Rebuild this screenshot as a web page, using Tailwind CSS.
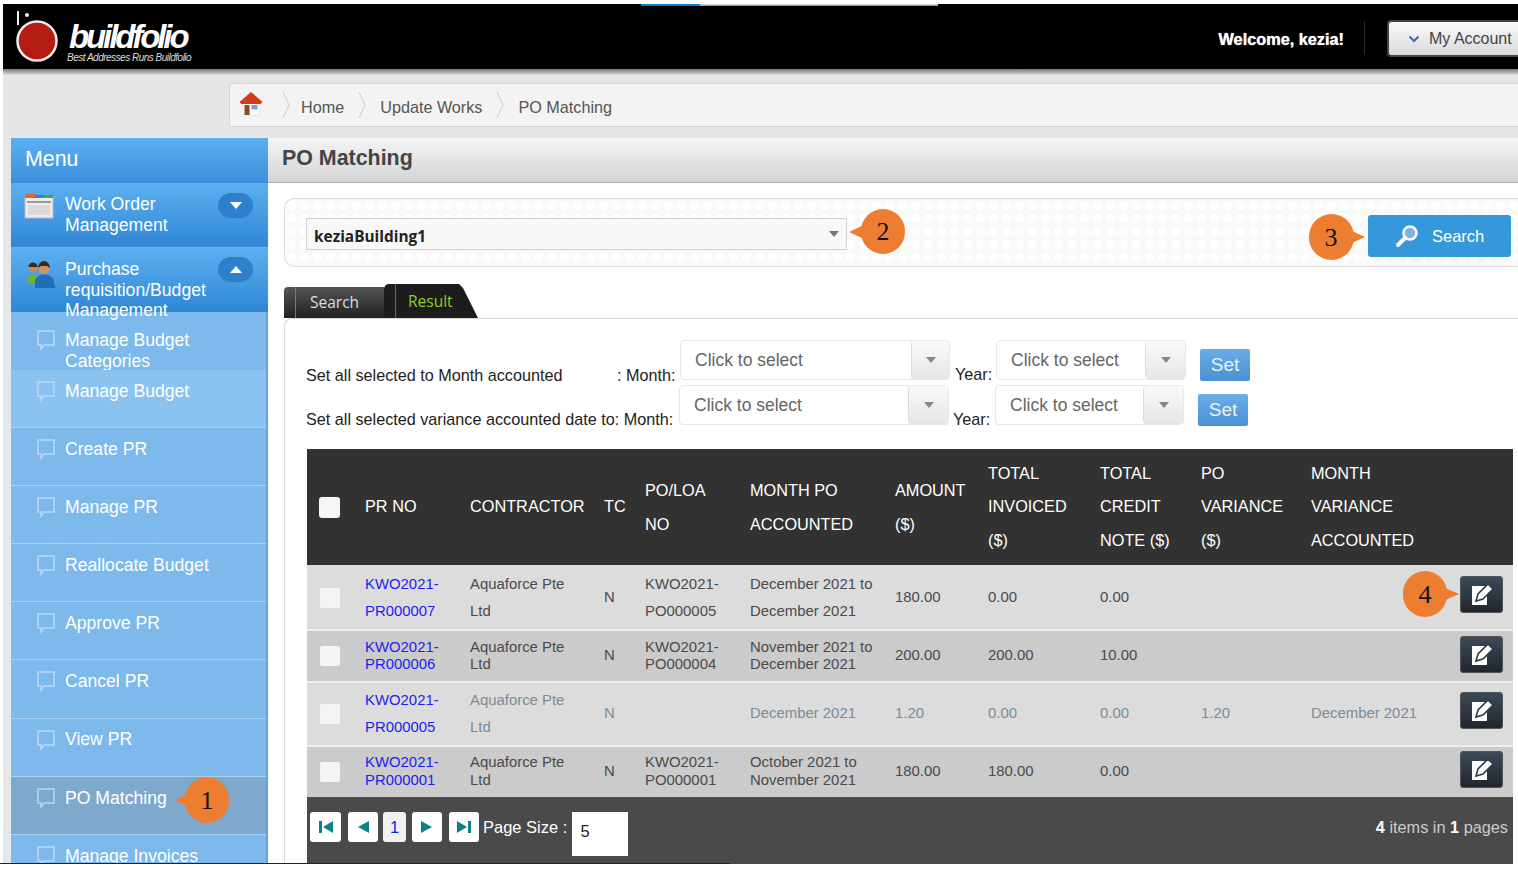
<!doctype html>
<html>
<head>
<meta charset="utf-8">
<script src="https://cdn.jsdelivr.net/npm/@tailwindcss/browser@4"></script>
</head>
<body class="bg-white overflow-hidden font-['Liberation_Sans',Arial,sans-serif]">
<div class="relative w-[1518px] h-[870px] overflow-hidden">
  <div class="h-1"></div>
  <div class="ml-[3px] h-[860px] bg-[#e5e6e7] overflow-hidden flex flex-col">
    <!-- header -->
    <header class="h-[65px] shrink-0 bg-black flex items-center relative">
      <div class="absolute left-[638px] top-0 flex h-[2px]"><div class="w-[59px] bg-[#0f7fd6]"></div><div class="w-[238px] bg-gradient-to-b from-[#eee] to-[#888]"></div></div>
      <div class="relative w-[200px] h-[65px] shrink-0">
        <svg class="absolute left-[12px] top-[6px]" width="48" height="54" viewBox="0 0 48 54"><rect x="2" y="1" width="2" height="14" fill="#eee"/><circle cx="12" cy="5" r="2" fill="#eee"/><circle cx="22" cy="31" r="19.500" fill="#b51c14" stroke="#eee" stroke-width="2.500"/></svg>
        <span class="absolute left-[66px] top-[19px] text-white italic font-bold text-[33px] leading-[28px] tracking-[-3.100px]">buildfolio</span>
        <span class="absolute left-[64px] top-[48px] text-[#ddd] italic text-[10px] leading-3 tracking-[-0.500px] whitespace-nowrap">Best Addresses Runs Buildfolio</span>
      </div>
      <div class="flex-1"></div>
      <span class="text-white font-bold text-[16.300px] mr-[20px] mt-[6px] [text-shadow:0_0_1px_#fff]">Welcome, kezia!</span>
      <div class="w-px h-[34px] bg-[#2a2a2a] mr-[22px] mt-[3px]"></div>
      <div class="w-[132px] h-[37px] -mr-[1px] mt-[4px] rounded-l-[4px] border-2 border-r-0 border-[#444] bg-gradient-to-b from-[#fafafa] to-[#d9dadc] flex items-center pl-[19px] gap-[9px]">
        <svg width="12" height="8" viewBox="0 0 12 8"><path d="M1.500 1.500 L6 6 L10.500 1.500" fill="none" stroke="#3b6ea5" stroke-width="2"/></svg>
        <span class="text-[16px] text-[#444] whitespace-nowrap">My Account</span>
      </div>
    </header>
    <div class="h-[6px] shrink-0 bg-gradient-to-b from-[#777] to-[#e0e1e2]"></div>
    <!-- breadcrumb -->
    <div class="h-[44px] mt-[8px] ml-[226px] shrink-0 bg-[#f3f3f3] border border-r-0 border-[#d6d6d6] flex items-center text-[16.200px] text-[#555]">
      <div class="w-[52px] pl-[9px] flex items-center -mt-[3px]">
        <svg width="24" height="26" viewBox="0 0 24 26"><path d="M3.500 10h17v14h-17z" fill="#fbfbf8" stroke="#ddd" stroke-width=".6"/><path d="M5.500 14h5v10h-5z" fill="#8a4a1a"/><path d="M12.500 14h6v4.500h-6z" fill="#7f9fc0"/><path d="M0.500 11 12 1l11.500 10-2 2H2.500z" fill="#d63a20"/></svg>
      </div>
      <svg class="mr-[11px]" width="8" height="28" viewBox="0 0 8 28"><path d="M1 1l6 13-6 13" fill="none" stroke="#ccc"/></svg>
      <span class="mt-[5px]">Home</span>
      <svg class="mx-[14px]" width="8" height="28" viewBox="0 0 8 28"><path d="M1 1l6 13-6 13" fill="none" stroke="#ccc"/></svg>
      <span class="mt-[5px]">Update Works</span>
      <svg class="mx-[14px]" width="8" height="28" viewBox="0 0 8 28"><path d="M1 1l6 13-6 13" fill="none" stroke="#ccc"/></svg>
      <span class="mt-[5px]">PO Matching</span>
    </div>
    <div class="flex flex-1 mt-[11px] ml-[8px] min-h-0 bg-white">
      <!-- sidebar -->
      <aside class="w-[257px] shrink-0 bg-[#7db9eb] text-white overflow-hidden text-[17.600px] leading-[20.500px]">
        <div class="h-[45px] flex items-center pl-[14px] pb-[3px] text-[21.400px] bg-gradient-to-b from-[#5cb0f0] to-[#3c8fdb]">Menu</div>
        <div class="h-[65px] relative pl-[54px] pt-[11px] bg-gradient-to-b from-[#5cb0f0] to-[#2f86d6] border-b border-[#7db9eb]/40 leading-[21px]">
          <svg class="absolute left-[13px] top-[10px]" width="30" height="26" viewBox="0 0 30 26"><rect x="1" y="4" width="28" height="21" fill="#ececec" stroke="#bbb"/><rect x="1" y="1" width="11" height="4" fill="#e2642c"/><rect x="11" y="2" width="9" height="3" fill="#3c7bc9"/><rect x="20" y="2" width="9" height="3" fill="#4aa547"/><rect x="3" y="8" width="24" height="2" fill="#999"/><rect x="4" y="12" width="22" height="10" fill="#d9d9d9"/></svg>
          <div>Work Order<br>Management</div>
          <div class="absolute left-[207px] top-[10px] w-[35px] h-[25px] rounded-full bg-[#2f80cc] flex items-center justify-center"><svg width="12" height="7"><path d="M0 0h12L6 7z" fill="#fff"/></svg></div>
        </div>
        <div class="h-[64px] relative pl-[54px] pt-[11px] bg-gradient-to-b from-[#5cb0f0] to-[#2f86d6]">
          <svg class="absolute left-[15px] top-[12px]" width="32" height="30" viewBox="0 0 32 30"><circle cx="7" cy="8" r="4.500" fill="#c08a60"/><path d="M2.500 7a4.500 4.500 0 0 1 9 0z" fill="#3a2a20"/><path d="M1 21c0-8 13-8 13 0v3H1z" fill="#6fb52c"/><circle cx="18" cy="8" r="6" fill="#c89670"/><path d="M12 8a6 7 0 0 1 12 0l-3-2h-6z" fill="#3a2a20"/><path d="M9 28v-6c0-10 19-10 19 0 0 2 1 5 2 6z" fill="#1f6fb5"/></svg>
          <div class="relative z-10">Purchase<br>requisition/Budget<br>Management</div>
          <div class="absolute left-[207px] top-[9px] w-[35px] h-[25px] rounded-full bg-[#2f80cc] flex items-center justify-center"><svg width="12" height="7"><path d="M0 7h12L6 0z" fill="#fff"/></svg></div>
        </div>
        <div class="border-r-[2px] border-[#62a3dd]">
          <div class="h-[58px] relative pl-[54px] pt-[18px] bg-[#7db9eb]"><svg class="absolute left-[26px] top-[18px]" width="18" height="21" viewBox="0 0 18 21"><path d="M1 1h16v14H7l-3 4v-4H1z" fill="none" stroke="#bcd8f4" stroke-width="1.500"/></svg><div>Manage Budget<br>Categories</div></div>
          <div class="h-[58px] relative pl-[54px] pt-[11px] bg-[#8ac2f0] border-b border-[#a6d2f5]"><svg class="absolute left-[26px] top-[11px]" width="18" height="21" viewBox="0 0 18 21"><path d="M1 1h16v14H7l-3 4v-4H1z" fill="none" stroke="#bcd8f4" stroke-width="1.500"/></svg>Manage Budget</div>
          <div class="h-[58px] relative pl-[54px] pt-[11px] border-b border-[#a6d2f5]"><svg class="absolute left-[26px] top-[11px]" width="18" height="21" viewBox="0 0 18 21"><path d="M1 1h16v14H7l-3 4v-4H1z" fill="none" stroke="#bcd8f4" stroke-width="1.500"/></svg>Create PR</div>
          <div class="h-[58px] relative pl-[54px] pt-[11px] border-b border-[#a6d2f5]"><svg class="absolute left-[26px] top-[11px]" width="18" height="21" viewBox="0 0 18 21"><path d="M1 1h16v14H7l-3 4v-4H1z" fill="none" stroke="#bcd8f4" stroke-width="1.500"/></svg>Manage PR</div>
          <div class="h-[58px] relative pl-[54px] pt-[11px] border-b border-[#a6d2f5]"><svg class="absolute left-[26px] top-[11px]" width="18" height="21" viewBox="0 0 18 21"><path d="M1 1h16v14H7l-3 4v-4H1z" fill="none" stroke="#bcd8f4" stroke-width="1.500"/></svg>Reallocate Budget</div>
          <div class="h-[58px] relative pl-[54px] pt-[11px] border-b border-[#a6d2f5]"><svg class="absolute left-[26px] top-[11px]" width="18" height="21" viewBox="0 0 18 21"><path d="M1 1h16v14H7l-3 4v-4H1z" fill="none" stroke="#bcd8f4" stroke-width="1.500"/></svg>Approve PR</div>
          <div class="h-[59px] relative pl-[54px] pt-[11px] border-b border-[#a6d2f5]"><svg class="absolute left-[26px] top-[11px]" width="18" height="21" viewBox="0 0 18 21"><path d="M1 1h16v14H7l-3 4v-4H1z" fill="none" stroke="#bcd8f4" stroke-width="1.500"/></svg>Cancel PR</div>
          <div class="h-[58px] relative pl-[54px] pt-[10px] border-b border-[#a6d2f5]"><svg class="absolute left-[26px] top-[11px]" width="18" height="21" viewBox="0 0 18 21"><path d="M1 1h16v14H7l-3 4v-4H1z" fill="none" stroke="#bcd8f4" stroke-width="1.500"/></svg>View PR</div>
          <div class="h-[58px] relative pl-[54px] pt-[11px] bg-[#7fa9cc] border-b border-[#a6d2f5]"><svg class="absolute left-[26px] top-[11px]" width="18" height="21" viewBox="0 0 18 21"><path d="M1 1h16v14H7l-3 4v-4H1z" fill="none" stroke="#bcd8f4" stroke-width="1.500"/></svg>PO Matching</div>
          <div class="h-[58px] relative pl-[54px] pt-[11px]"><svg class="absolute left-[26px] top-[11px]" width="18" height="21" viewBox="0 0 18 21"><path d="M1 1h16v14H7l-3 4v-4H1z" fill="none" stroke="#bcd8f4" stroke-width="1.500"/></svg>Manage Invoices</div>
        </div>
      </aside>
      <!-- main -->
      <main class="flex-1 min-w-0 bg-white">
        <div class="h-[45px] pl-[14px] pb-[3px] flex items-center bg-gradient-to-b from-[#f4f5f5] to-[#d3d4d6] border-b border-[#a9abae] text-[21.400px] font-bold text-[#444]">PO Matching</div>
        <div class="ml-[16px] mt-[15px] h-[69px] rounded-l-[10px] border border-r-0 border-[#dcdcdc] bg-[#f9f9f9] bg-[radial-gradient(circle,#ffffff_4px,transparent_5px)] bg-[length:13px_13px] flex items-center relative">
          <div class="ml-[21px] mt-[2px] w-[541px] h-[32px] border border-[#d0d0d0] bg-[#f8f8f8] flex items-center pl-[7px] pt-[7px] font-bold text-[15.400px] text-[#222] font-['Open_Sans',sans-serif] relative">keziaBuilding1<svg class="absolute right-[7px] top-[12px]" width="10" height="6"><path d="M0 0h10L5 6z" fill="#777"/></svg></div>
          <div class="absolute left-[1083px] top-[16px] w-[143px] h-[42px] rounded-[3px] bg-[#3498db] text-white flex items-center text-[16.500px] pl-[27px] gap-[13px]">
            <svg width="24" height="24" viewBox="0 0 24 24"><circle cx="15" cy="9" r="6.500" fill="#7fb3e6" stroke="#fff" stroke-width="2.500"/><path d="M10 14 3 21" stroke="#fff" stroke-width="4" stroke-linecap="round"/></svg>
            <span>Search</span>
          </div>
        </div>
        <!-- tabs -->
        <div class="ml-[16px] mt-[17px] h-[34px] flex items-end font-['Open_Sans',sans-serif] text-[15.500px]">
          <div class="w-[100px] h-[31px] rounded-tl-[4px] bg-gradient-to-b from-[#555] to-[#222] text-[#ddd] pl-[11px] flex items-stretch"><span class="border-l border-[#777] pl-[14px] leading-[30px]">Search</span></div>
          <div class="w-[94px] h-[34px] bg-[#1c1c1c] text-[#8fd11f] pl-[11px] rounded-tl-[5px] [clip-path:polygon(0_0,75px_0,79px_4px,94px_100%,0_100%)] flex items-stretch"><span class="border-l border-[#666] pl-[12px] leading-[35px]">Result</span></div>
        </div>
        <!-- result panel -->
        <div class="ml-[16px] h-[600px] rounded-tl-[8px] border-l border-t border-[#d9d9d9] relative">
          <!-- row 1 -->
          <div class="flex items-end h-[40px] mt-[21px] pl-[21px] text-[16.200px] text-[#222] leading-[20px]">
            <span class="w-[311px] -mb-[5px] whitespace-nowrap">Set all selected to Month accounted</span><span class="w-[63px] -mb-[5px] whitespace-nowrap">: Month:</span>
            <div class="w-[270px] h-[40px] rounded-[4px] border border-[#e8e8e8] bg-white flex text-[#666] text-[17.500px]"><span class="flex-1 pl-[14px] leading-[38px]">Click to select</span><span class="w-[38px] rounded-[4px] bg-gradient-to-b from-[#fafafa] to-[#e6e6e6] border-l border-[#ddd] flex items-center justify-center"><svg width="10" height="6"><path d="M0 0h10L5 6z" fill="#888"/></svg></span></div>
            <span class="w-[46px] pl-[5px] -mb-[4px]">Year:</span>
            <div class="w-[190px] h-[40px] rounded-[4px] border border-[#e8e8e8] bg-white flex text-[#666] text-[17.500px]"><span class="flex-1 pl-[14px] leading-[38px]">Click to select</span><span class="w-[40px] rounded-[4px] bg-gradient-to-b from-[#fafafa] to-[#e6e6e6] border-l border-[#ddd] flex items-center justify-center"><svg width="10" height="6"><path d="M0 0h10L5 6z" fill="#888"/></svg></span></div>
            <div class="ml-[14px] w-[50px] h-[32px] mb-[-1px] rounded-[2px] bg-gradient-to-b from-[#69aee6] to-[#4a90d2] text-[#e8f3fb] text-[19px] flex items-center justify-center">Set</div>
          </div>
          <!-- row 2 -->
          <div class="flex items-end h-[40px] mt-[5px] pl-[21px] text-[16.200px] text-[#222] leading-[20px]">
            <span class="w-[373px] -mb-[4px] whitespace-nowrap">Set all selected variance accounted date to: Month:</span>
            <div class="w-[270px] h-[40px] rounded-[4px] border border-[#e8e8e8] bg-white flex text-[#666] text-[17.500px]"><span class="flex-1 pl-[14px] leading-[38px]">Click to select</span><span class="w-[40px] rounded-[4px] bg-gradient-to-b from-[#fafafa] to-[#e6e6e6] border-l border-[#ddd] flex items-center justify-center"><svg width="10" height="6"><path d="M0 0h10L5 6z" fill="#888"/></svg></span></div>
            <span class="w-[46px] pl-[4px] -mb-[4px]">Year:</span>
            <div class="w-[189px] h-[40px] rounded-[4px] border border-[#e8e8e8] bg-white flex text-[#666] text-[17.500px]"><span class="flex-1 pl-[14px] leading-[38px]">Click to select</span><span class="w-[40px] rounded-[4px] bg-gradient-to-b from-[#fafafa] to-[#e6e6e6] border-l border-[#ddd] flex items-center justify-center"><svg width="10" height="6"><path d="M0 0h10L5 6z" fill="#888"/></svg></span></div>
            <div class="ml-[14px] w-[50px] h-[32px] mb-[-1px] rounded-[2px] bg-gradient-to-b from-[#69aee6] to-[#4a90d2] text-[#e8f3fb] text-[19px] flex items-center justify-center">Set</div>
          </div>
          <!-- table -->
          <div class="ml-[22px] mt-[24px] w-[1206px]">
            <table class="w-[1206px] table-fixed border-collapse text-[14.900px] text-[#4a4a4a]">
              <colgroup><col class="w-[58px]"><col class="w-[105px]"><col class="w-[134px]"><col class="w-[41px]"><col class="w-[105px]"><col class="w-[145px]"><col class="w-[93px]"><col class="w-[112px]"><col class="w-[101px]"><col class="w-[110px]"><col class="w-[150px]"><col class="w-[52px]"></colgroup>
              <thead class="bg-[#323232] text-white text-[16.300px] leading-[33.500px] text-left font-normal">
                <tr class="h-[116px]">
                  <th class="font-normal pl-[12px]"><span class="block w-[21px] h-[21px] rounded-[3px] bg-[#f6f6f6]"></span></th>
                  <th class="font-normal">PR NO</th><th class="font-normal">CONTRACTOR</th><th class="font-normal">TC</th>
                  <th class="font-normal pb-[1px] leading-[34px]">PO/LOA<br>NO</th><th class="font-normal pb-[1px] leading-[34px]">MONTH PO<br>ACCOUNTED</th><th class="font-normal pb-[1px] leading-[34px]">AMOUNT<br>($)</th>
                  <th class="font-normal">TOTAL<br>INVOICED<br>($)</th><th class="font-normal">TOTAL<br>CREDIT<br>NOTE ($)</th><th class="font-normal">PO<br>VARIANCE<br>($)</th><th class="font-normal">MONTH<br>VARIANCE<br>ACCOUNTED</th><th></th>
                </tr>
              </thead>
              <tbody>
                <tr class="h-[65px] bg-[#dcdcdc] border-b-2 border-[#eee] leading-[27px] [&>td]:pt-[1px]">
                  <td class="pl-[13px]"><span class="block w-[20px] h-[20px] rounded-[2px] bg-[#f4f4f4]"></span></td>
                  <td class="text-[#1e1ef0]">KWO2021-<br>PR000007</td><td>Aquaforce Pte<br>Ltd</td><td>N</td><td>KWO2021-<br>PO000005</td><td>December 2021 to<br>December 2021</td><td>180.00</td><td>0.00</td><td>0.00</td><td></td><td></td>
                  <td><span class="flex -ml-[1px] mb-[7px] w-[43px] h-[37px] rounded-[3px] border border-[#555] bg-gradient-to-b from-[#3e4a59] to-[#20262e] items-center justify-center"><svg width="26" height="24" viewBox="0 0 26 24"><path d="M3 4h15v19H3z" fill="#fff"/><path d="M7 19l2-7L19 2l5 5-10 10z" fill="#fff" stroke="#2f3a47" stroke-width="1.600"/></svg></span></td>
                </tr>
                <tr class="h-[52px] bg-[#cbcbcb] border-b-2 border-[#eee] leading-[17px] [&>td]:pb-[1px]">
                  <td class="pl-[13px]"><span class="block w-[20px] h-[20px] rounded-[2px] bg-[#f4f4f4]"></span></td>
                  <td class="text-[#1e1ef0]">KWO2021-<br>PR000006</td><td>Aquaforce Pte<br>Ltd</td><td>N</td><td>KWO2021-<br>PO000004</td><td>November 2021 to<br>December 2021</td><td>200.00</td><td>200.00</td><td>10.00</td><td></td><td></td>
                  <td><span class="flex -ml-[1px] mb-[3px] w-[43px] h-[37px] rounded-[3px] border border-[#555] bg-gradient-to-b from-[#3e4a59] to-[#20262e] items-center justify-center"><svg width="26" height="24" viewBox="0 0 26 24"><path d="M3 4h15v19H3z" fill="#fff"/><path d="M7 19l2-7L19 2l5 5-10 10z" fill="#fff" stroke="#2f3a47" stroke-width="1.600"/></svg></span></td>
                </tr>
                <tr class="h-[64px] bg-[#dcdcdc] border-b-2 border-[#eee] leading-[27px] text-[#7d8b96] [&>td]:pb-[1px]">
                  <td class="pl-[13px]"><span class="block w-[20px] h-[20px] rounded-[2px] bg-[#f4f4f4]"></span></td>
                  <td class="text-[#1e1ef0]">KWO2021-<br>PR000005</td><td>Aquaforce Pte<br>Ltd</td><td>N</td><td></td><td>December 2021</td><td>1.20</td><td>0.00</td><td>0.00</td><td>1.20</td><td>December 2021</td>
                  <td><span class="flex -ml-[1px] mb-[7px] w-[43px] h-[37px] rounded-[3px] border border-[#555] bg-gradient-to-b from-[#3e4a59] to-[#20262e] items-center justify-center"><svg width="26" height="24" viewBox="0 0 26 24"><path d="M3 4h15v19H3z" fill="#fff"/><path d="M7 19l2-7L19 2l5 5-10 10z" fill="#fff" stroke="#2f3a47" stroke-width="1.600"/></svg></span></td>
                </tr>
                <tr class="h-[51px] bg-[#cbcbcb] leading-[17.500px] [&>td]:pb-[1px]">
                  <td class="pl-[13px]"><span class="block w-[20px] h-[20px] rounded-[2px] bg-[#f4f4f4]"></span></td>
                  <td class="text-[#1e1ef0]">KWO2021-<br>PR000001</td><td>Aquaforce Pte<br>Ltd</td><td>N</td><td>KWO2021-<br>PO000001</td><td>October 2021 to<br>November 2021</td><td>180.00</td><td>180.00</td><td>0.00</td><td></td><td></td>
                  <td><span class="flex -ml-[1px] mb-[5px] w-[43px] h-[37px] rounded-[3px] border border-[#555] bg-gradient-to-b from-[#3e4a59] to-[#20262e] items-center justify-center"><svg width="26" height="24" viewBox="0 0 26 24"><path d="M3 4h15v19H3z" fill="#fff"/><path d="M7 19l2-7L19 2l5 5-10 10z" fill="#fff" stroke="#2f3a47" stroke-width="1.600"/></svg></span></td>
                </tr>
              </tbody>
            </table>
            <!-- pager -->
            <div class="h-[70px] bg-[#4a4a4a] text-white flex items-start pt-[15px] pl-[3px] relative text-[16.500px]">
              <span class="w-[31px] h-[30px] rounded-[3px] bg-white flex items-center justify-center"><svg width="14" height="12"><path d="M0 0h3v12H0zM14 0v12L4 6z" fill="#0f7f8c"/></svg></span>
              <span class="w-[30px] h-[30px] ml-[7px] rounded-[3px] bg-white flex items-center justify-center"><svg width="12" height="12"><path d="M12 0v12L1 6z" fill="#0f7f8c"/></svg></span>
              <span class="w-[23px] h-[30px] ml-[5px] rounded-[3px] bg-[#f1f1f1] text-[#1a1ae6] text-[16.500px] flex items-center justify-center">1</span>
              <span class="w-[30px] h-[30px] ml-[6px] rounded-[3px] bg-white flex items-center justify-center"><svg width="12" height="12"><path d="M0 0v12l11-6z" fill="#0f7f8c"/></svg></span>
              <span class="w-[30px] h-[30px] ml-[7px] rounded-[3px] bg-white flex items-center justify-center"><svg width="14" height="12"><path d="M11 0h3v12h-3zM0 0v12l10-6z" fill="#0f7f8c"/></svg></span>
              <span class="ml-[4px] leading-[30px] whitespace-nowrap">Page Size :</span>
              <span class="ml-[5px] w-[56px] h-[44px] bg-white text-[#222] pl-[8px] leading-[38px]">5</span>
              <span class="absolute right-[5px] top-[18px] whitespace-nowrap text-[#ccc] text-[16.300px]"><span class="text-white font-bold">4</span> items in <span class="text-white font-bold">1</span> pages</span>
            </div>
          </div>
        </div>
      </main>
    </div>
  </div>
  <!-- bottom rule -->
  <div class="absolute left-0 top-[863px] w-[730px] h-px bg-[#222]"></div>

  <!-- callouts -->
  <div class="absolute left-[185px] top-[777px] w-[44px] h-[46px] rounded-full bg-[#ed7d31] flex items-center justify-center font-['Liberation_Serif',serif] text-[26px] text-[#111]">1</div>
  <svg class="absolute left-[174px] top-[790px]" width="16" height="20"><path d="M1 10 16 2v16z" fill="#ed7d31"/></svg>
  <div class="absolute left-[861px] top-[209px] w-[44px] h-[45px] rounded-full bg-[#ed7d31] flex items-center justify-center font-['Liberation_Serif',serif] text-[26px] text-[#111]">2</div>
  <svg class="absolute left-[848px] top-[222px]" width="16" height="20"><path d="M1 10 16 3v14z" fill="#ed7d31"/></svg>
  <div class="absolute left-[1309px] top-[214px] w-[45px] h-[46px] rounded-full bg-[#ed7d31] flex items-center justify-center font-['Liberation_Serif',serif] text-[26px] text-[#111] pr-[1px]">3</div>
  <svg class="absolute left-[1350px] top-[227px]" width="16" height="20"><path d="M15 10 0 3v14z" fill="#ed7d31"/></svg>
  <div class="absolute left-[1403px] top-[571px] w-[44px] h-[46px] rounded-full bg-[#ed7d31] flex items-center justify-center font-['Liberation_Serif',serif] text-[26px] text-[#111]">4</div>
  <svg class="absolute left-[1443px] top-[584px]" width="16" height="20"><path d="M16 10 0 3v14z" fill="#ed7d31"/></svg>
</div>
</body>
</html>
